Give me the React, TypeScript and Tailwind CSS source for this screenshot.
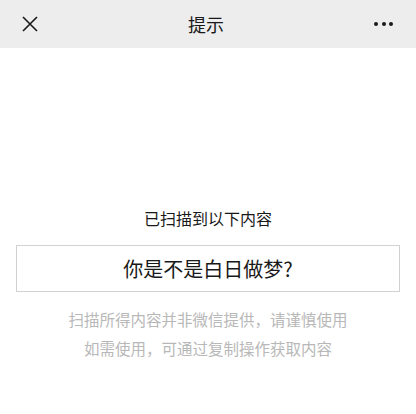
import React from "react";

export default function App() {
  return (
    <div
      className="w-[416px] h-[414px] bg-white overflow-hidden"
      style={{ fontFamily: '"Noto Sans CJK SC", "Noto Sans", sans-serif' }}
    >
      {/* Header */}
      <div className="h-12 bg-[#ededed] flex items-center justify-between px-[22px]">
        <svg width="16" height="16" viewBox="0 0 16 16" className="shrink-0">
          <path d="M1 1 L15 15 M15 1 L1 15" stroke="#191919" strokeWidth="1.6" fill="none" />
        </svg>
        <div className="text-[18px] leading-6 text-[#191919]">提示</div>
        <div className="flex items-center gap-[3.5px] pr-[1px]">
          <span className="w-[4px] h-[4px] rounded-full bg-[#191919]" />
          <span className="w-[4px] h-[4px] rounded-full bg-[#191919]" />
          <span className="w-[4px] h-[4px] rounded-full bg-[#191919]" />
        </div>
      </div>

      {/* Body */}
      <div className="flex flex-col items-center pt-[158px] px-4">
        <div className="text-[16px] leading-6 text-[#191919]">已扫描到以下内容</div>
        <div className="mt-[15px] w-full h-[47px] border border-[#d2d2d2] flex items-center justify-center">
          <span className="text-[20px] text-[#191919]">你是不是白日做梦?</span>
        </div>
        <div className="mt-[13px] text-[15.5px] leading-[29px] text-[#b8b8b8] text-center">
          <p>扫描所得内容并非微信提供，请谨慎使用</p>
          <p>如需使用，可通过复制操作获取内容</p>
        </div>
      </div>
    </div>
  );
}
